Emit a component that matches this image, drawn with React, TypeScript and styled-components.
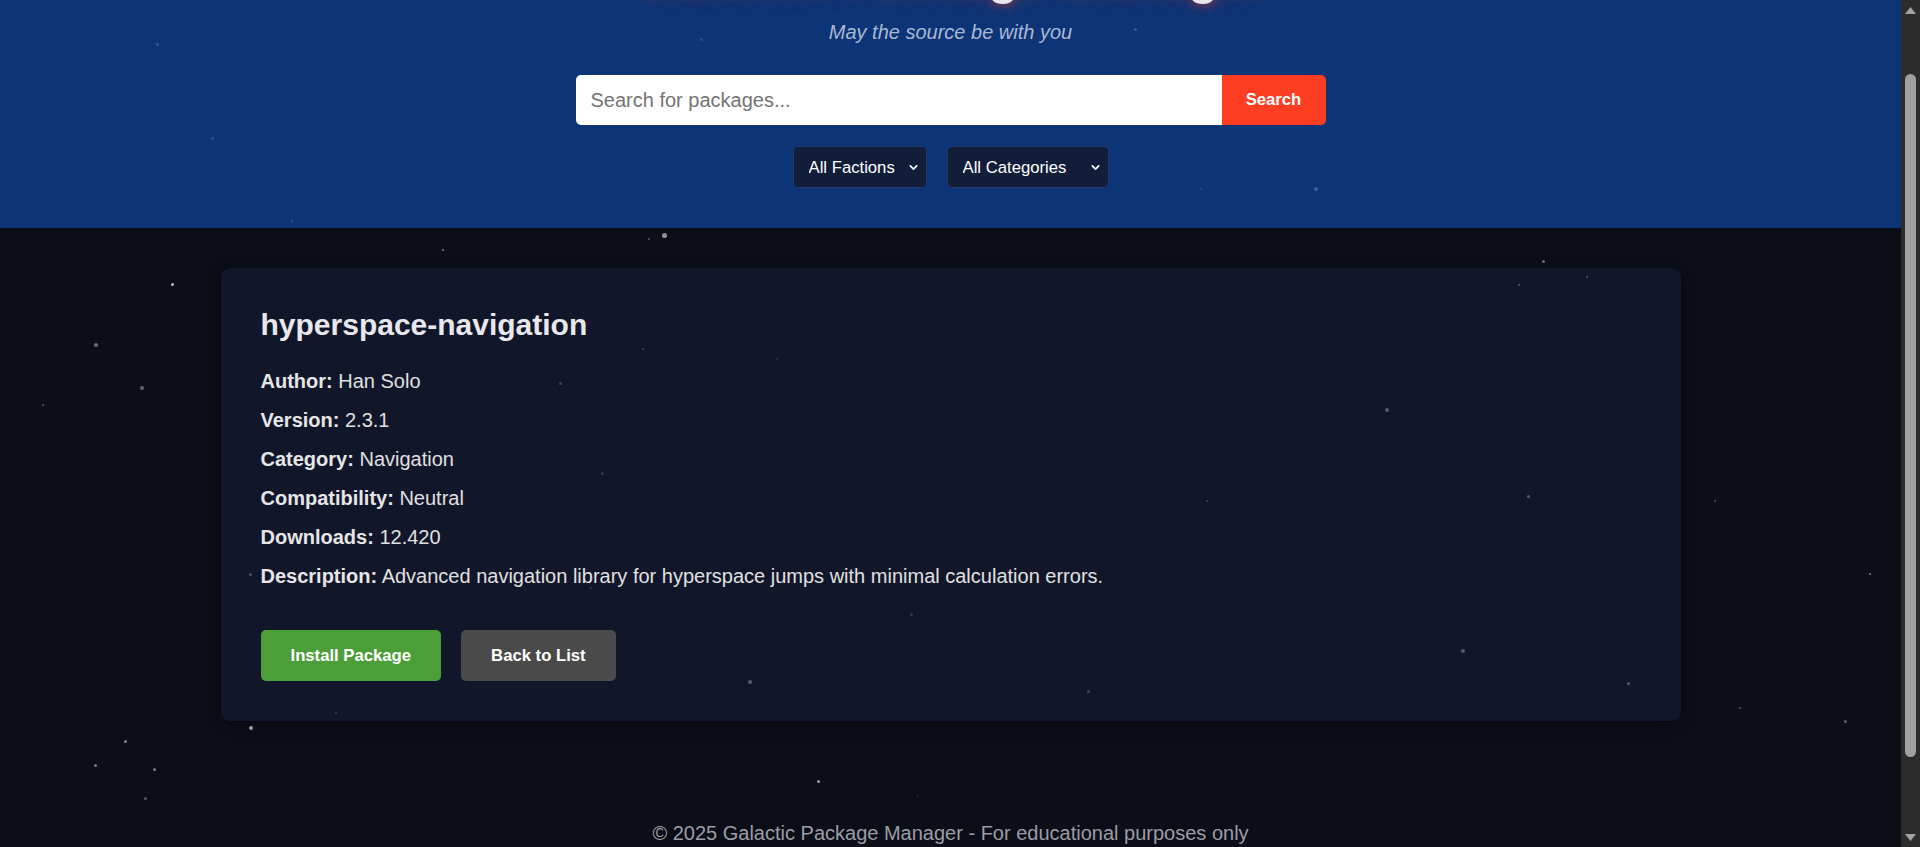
import React, { useEffect, useRef, useState } from "react";
import styled, { createGlobalStyle } from "styled-components";

const GlobalStyle = createGlobalStyle`
  html, body {
    margin: 0;
    padding: 0;
    background: #0b0e17;
    overflow: hidden;
  }
  body {
    font-family: "Liberation Sans", Arial, sans-serif;
    color: #e0e0e0;
  }
`;

const Shell = styled.div`
  height: 100vh;
  margin-right: 19px;
  overflow-y: scroll;
  background: #0b0e17;
  scrollbar-width: none;
  &::-webkit-scrollbar {
    display: none;
  }
`;

const ScrollRail = styled.div`
  position: fixed;
  top: 0;
  right: 0;
  bottom: 0;
  width: 19px;
  background: #2c2c2c;
  z-index: 10;
`;

const RailArrow = styled.svg<{ $down?: boolean }>`
  position: absolute;
  left: 3px;
  width: 13px;
  height: 9px;
  ${(p) => (p.$down ? "bottom: 5px;" : "top: 6px;")}
`;

const RailThumb = styled.div`
  position: absolute;
  left: 4px;
  width: 11px;
  border-radius: 6px;
  background: #9f9f9f;
`;

const StarField = styled.div`
  position: fixed;
  inset: 0;
  pointer-events: none;
  z-index: 5;
`;

const Star = styled.span<{ $s: number }>`
  position: absolute;
  width: ${(p) => p.$s}px;
  height: ${(p) => p.$s}px;
  border-radius: 50%;
  background: #ffffff;
`;

const Header = styled.header`
  background: #0c3476;
  padding: 17px 20px 40px;
  text-align: center;
`;

const Title = styled.h1`
  margin: 0 0 16px;
  font-size: 50px;
  line-height: 56px;
  font-weight: 700;
  color: #e8e8ec;
  text-shadow: 0 0 10px rgba(252, 61, 33, 0.7), 0 0 22px rgba(252, 61, 33, 0.35);
`;

const Subtitle = styled.p`
  margin: 0;
  font-size: 20px;
  line-height: 23px;
  font-style: italic;
  color: #aab8d4;
`;

const SearchBar = styled.form`
  display: flex;
  width: 750px;
  height: 50px;
  margin: 31px auto 0;
`;

const SearchInput = styled.input`
  flex: 1;
  min-width: 0;
  border: none;
  outline: none;
  border-radius: 5px 0 0 5px;
  padding: 0 15px;
  font-family: "Liberation Sans", Arial, sans-serif;
  font-size: 20px;
  color: #222;
  background: #ffffff;
  &::placeholder {
    color: #757575;
  }
`;

const SearchButton = styled.button`
  width: 104px;
  border: none;
  border-radius: 0 5px 5px 0;
  background: #fc3d21;
  color: #ffffff;
  font-family: "Liberation Sans", Arial, sans-serif;
  font-size: 16.7px;
  font-weight: 700;
  cursor: pointer;
`;

const Filters = styled.div`
  display: flex;
  justify-content: center;
  gap: 20px;
  margin-top: 21px;
`;

const SelectWrap = styled.div`
  position: relative;
  display: inline-flex;
`;

const Select = styled.select<{ $w: number }>`
  appearance: none;
  -webkit-appearance: none;
  width: ${(p) => p.$w}px;
  height: 42px;
  padding: 0 30px 0 15px;
  background: #121d3a;
  color: #ffffff;
  border: 1px solid #24396b;
  border-radius: 5px;
  font-family: "Liberation Sans", Arial, sans-serif;
  font-size: 16.7px;
  outline: none;
`;

const Chevron = styled.svg`
  position: absolute;
  right: 8px;
  top: 50%;
  width: 11px;
  height: 11px;
  margin-top: -5px;
  pointer-events: none;
`;

const Main = styled.main`
  padding: 40px 20px 40px;
`;

const Card = styled.section`
  max-width: 1460px;
  margin: 0 auto;
  box-sizing: border-box;
  background: #11162a;
  border-radius: 9px;
  padding: 40px;
  box-shadow: 0 4px 14px rgba(0, 0, 0, 0.35);
`;

const PackageName = styled.h2`
  margin: 0 0 28px;
  font-size: 30px;
  line-height: 34px;
  font-weight: 700;
  color: #e8e8ec;
`;

const Details = styled.div`
  display: flex;
  flex-direction: column;
  gap: 16px;
`;

const DetailRow = styled.p`
  margin: 0;
  font-size: 20px;
  line-height: 23px;
  color: #e0e0e0;
`;

const Label = styled.strong`
  font-weight: 700;
  color: #e6e6e6;
`;

const Actions = styled.div`
  display: flex;
  gap: 20px;
  margin-top: 42px;
`;

const ActionButton = styled.button<{ $variant: "install" | "back" }>`
  height: 51px;
  padding: 0 30px;
  border: none;
  border-radius: 5px;
  background: ${(p) => (p.$variant === "install" ? "#4c9f38" : "#4a4a4a")};
  color: #ffffff;
  font-family: "Liberation Sans", Arial, sans-serif;
  font-size: 16.7px;
  font-weight: 700;
  cursor: pointer;
`;

const Footer = styled.footer`
  padding: 61px 20px 90px;
  text-align: center;
  font-size: 20px;
  line-height: 23px;
  color: #9a9da4;
`;

const stars: [number, number, number, number][] = [
  [156, 43, 3, 0.18],
  [211, 137, 3, 0.15],
  [291, 220, 2, 0.15],
  [700, 38, 3, 0.12],
  [1134, 28, 3, 0.18],
  [1314, 187, 4, 0.2],
  [1200, 188, 2, 0.12],
  [648, 238, 2, 0.3],
  [662, 233, 5, 0.55],
  [442, 249, 2, 0.45],
  [171, 283, 3, 0.7],
  [94, 343, 4, 0.4],
  [140, 386, 4, 0.35],
  [42, 404, 2, 0.35],
  [1542, 260, 3, 0.4],
  [1518, 284, 2, 0.3],
  [1586, 276, 2, 0.3],
  [642, 348, 2, 0.2],
  [776, 358, 2, 0.15],
  [559, 382, 3, 0.2],
  [1385, 408, 4, 0.3],
  [1527, 495, 3, 0.3],
  [1714, 500, 2, 0.3],
  [1206, 500, 2, 0.2],
  [601, 472, 3, 0.15],
  [249, 573, 3, 0.25],
  [590, 587, 2, 0.15],
  [1869, 573, 2, 0.45],
  [910, 613, 3, 0.15],
  [1461, 649, 4, 0.3],
  [1627, 682, 3, 0.3],
  [1087, 690, 3, 0.2],
  [748, 680, 4, 0.3],
  [1739, 707, 2, 0.3],
  [1844, 720, 3, 0.35],
  [335, 712, 2, 0.2],
  [249, 726, 4, 0.6],
  [124, 740, 3, 0.5],
  [94, 764, 3, 0.45],
  [153, 768, 3, 0.45],
  [817, 780, 3, 0.6],
  [144, 797, 3, 0.3],
  [917, 795, 1, 0.3],
];

const details: [string, string][] = [
  ["Author", "Han Solo"],
  ["Version", "2.3.1"],
  ["Category", "Navigation"],
  ["Compatibility", "Neutral"],
  ["Downloads", "12.420"],
  ["Description", "Advanced navigation library for hyperspace jumps with minimal calculation errors."],
];

const ChevronIcon = () => (
  <Chevron viewBox="0 0 12 12">
    <path d="M2.5 4.2 L6 7.7 L9.5 4.2" fill="none" stroke="#ffffff" strokeWidth="1.8" strokeLinecap="round" strokeLinejoin="round" />
  </Chevron>
);

const ARROW = 19;

export default function App() {
  const shellRef = useRef<HTMLDivElement>(null);
  const [thumb, setThumb] = useState({ top: 76, height: 682 });

  useEffect(() => {
    const el = shellRef.current;
    if (!el) return;
    const update = () => {
      const track = el.clientHeight - ARROW * 2;
      const h = (track * el.clientHeight) / el.scrollHeight;
      const top = ARROW + (track * el.scrollTop) / el.scrollHeight;
      setThumb({ top, height: h });
    };
    el.scrollTop = 68;
    update();
    el.addEventListener("scroll", update);
    const t = setTimeout(() => {
      el.scrollTop = 68;
      update();
    }, 50);
    return () => {
      clearTimeout(t);
      el.removeEventListener("scroll", update);
    };
  }, []);

  return (
    <>
      <GlobalStyle />
      <Shell ref={shellRef}>
        <Header>
          <Title>Galactic Package Manager</Title>
          <Subtitle>May the source be with you</Subtitle>
          <SearchBar onSubmit={(e) => e.preventDefault()}>
            <SearchInput type="text" placeholder="Search for packages..." />
            <SearchButton type="submit">Search</SearchButton>
          </SearchBar>
          <Filters>
            <SelectWrap>
              <Select $w={134} defaultValue="all">
                <option value="all">All Factions</option>
                <option value="rebel">Rebel Alliance</option>
                <option value="empire">Galactic Empire</option>
                <option value="neutral">Neutral</option>
              </Select>
              <ChevronIcon />
            </SelectWrap>
            <SelectWrap>
              <Select $w={162} defaultValue="all">
                <option value="all">All Categories</option>
                <option value="navigation">Navigation</option>
                <option value="weapons">Weapons</option>
                <option value="communication">Communication</option>
              </Select>
              <ChevronIcon />
            </SelectWrap>
          </Filters>
        </Header>

        <Main>
          <Card>
            <PackageName>hyperspace-navigation</PackageName>
            <Details>
              {details.map(([k, v]) => (
                <DetailRow key={k}>
                  <Label>{k}:</Label> {v}
                </DetailRow>
              ))}
            </Details>
            <Actions>
              <ActionButton $variant="install">Install Package</ActionButton>
              <ActionButton $variant="back">Back to List</ActionButton>
            </Actions>
          </Card>
        </Main>

        <Footer>© 2025 Galactic Package Manager - For educational purposes only</Footer>
      </Shell>

      <StarField>
        {stars.map(([x, y, s, o], i) => (
          <Star key={i} $s={s} style={{ left: x, top: y, opacity: o }} />
        ))}
      </StarField>

      <ScrollRail>
        <RailArrow viewBox="0 0 13 9">
          <path d="M6.5 1 L12 8 L1 8 Z" fill="#a3a3a3" />
        </RailArrow>
        <RailThumb style={{ top: thumb.top, height: thumb.height }} />
        <RailArrow $down viewBox="0 0 13 9">
          <path d="M1 1 L12 1 L6.5 8 Z" fill="#a3a3a3" />
        </RailArrow>
      </ScrollRail>
    </>
  );
}
